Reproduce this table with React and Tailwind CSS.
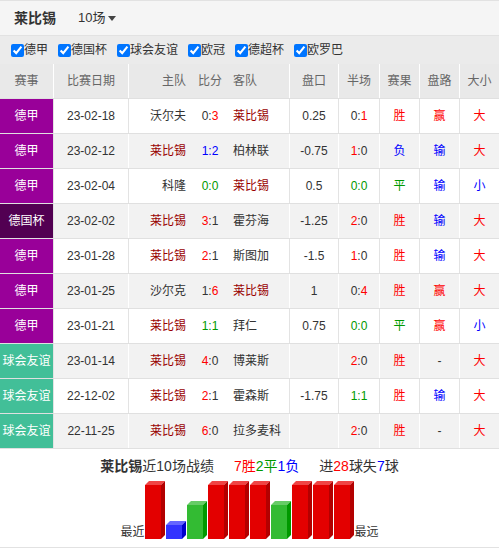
const RED = 'text-[#ff0000]';
const BLUE = 'text-[#0000ff]';
const GREEN = 'text-[#009900]';

const leagues = {
  德甲: 'bg-[#990099]',
  德国杯: 'bg-[#520052]',
  球会友谊: 'bg-[#42bf98]',
};

// sc / hc: which side of the score gets highlighted ('h' home, 'a' away, 'lose', 'draw')
const matches = [
  { league: '德甲', date: '23-02-18', home: '沃尔夫', score: ['0', '3'], sc: 'a', away: '莱比锡', line: '0.25', half: ['0', '1'], hc: 'a', res: '胜', pan: '赢', ou: '大' },
  { league: '德甲', date: '23-02-12', home: '莱比锡', score: ['1', '2'], sc: 'lose', away: '柏林联', line: '-0.75', half: ['1', '0'], hc: 'h', res: '负', pan: '输', ou: '大' },
  { league: '德甲', date: '23-02-04', home: '科隆', score: ['0', '0'], sc: 'draw', away: '莱比锡', line: '0.5', half: ['0', '0'], hc: 'draw', res: '平', pan: '输', ou: '小' },
  { league: '德国杯', date: '23-02-02', home: '莱比锡', score: ['3', '1'], sc: 'h', away: '霍芬海', line: '-1.25', half: ['2', '0'], hc: 'h', res: '胜', pan: '输', ou: '大' },
  { league: '德甲', date: '23-01-28', home: '莱比锡', score: ['2', '1'], sc: 'h', away: '斯图加', line: '-1.5', half: ['1', '0'], hc: 'h', res: '胜', pan: '输', ou: '大' },
  { league: '德甲', date: '23-01-25', home: '沙尔克', score: ['1', '6'], sc: 'a', away: '莱比锡', line: '1', half: ['0', '4'], hc: 'a', res: '胜', pan: '赢', ou: '大' },
  { league: '德甲', date: '23-01-21', home: '莱比锡', score: ['1', '1'], sc: 'draw', away: '拜仁', line: '0.75', half: ['0', '0'], hc: 'draw', res: '平', pan: '赢', ou: '小' },
  { league: '球会友谊', date: '23-01-14', home: '莱比锡', score: ['4', '0'], sc: 'h', away: '博莱斯', line: '', half: ['2', '0'], hc: 'h', res: '胜', pan: '-', ou: '大' },
  { league: '球会友谊', date: '22-12-02', home: '莱比锡', score: ['2', '1'], sc: 'h', away: '霍森斯', line: '-1.75', half: ['1', '1'], hc: 'draw', res: '胜', pan: '输', ou: '大' },
  { league: '球会友谊', date: '22-11-25', home: '莱比锡', score: ['6', '0'], sc: 'h', away: '拉多麦科', line: '', half: ['2', '0'], hc: 'h', res: '胜', pan: '-', ou: '大' },
];

const resColor = { 胜: RED, 负: BLUE, 平: GREEN };
const panColor = { 赢: RED, 输: BLUE, '-': 'text-[#333]' };
const ouColor = { 大: RED, 小: BLUE };

function Score({ pair, mode }) {
  if (mode === 'lose') return <span className={BLUE}>{pair[0]}:{pair[1]}</span>;
  if (mode === 'draw') return <span className={GREEN}>{pair[0]}:{pair[1]}</span>;
  return (
    <span className="text-[#333]">
      <span className={mode === 'h' ? RED : ''}>{pair[0]}</span>:
      <span className={mode === 'a' ? RED : ''}>{pair[1]}</span>
    </span>
  );
}

function Team({ name }) {
  return <span className={name === '莱比锡' ? 'text-[#990000]' : 'text-[#333]'}>{name}</span>;
}

const cols = 'grid grid-cols-[54px_75px_62px_38px_61px_49px_41px_40px_40px_39px]';

function Bars() {
  const results = ['胜', '负', '平', '胜', '胜', '胜', '平', '胜', '胜', '胜'];
  const spec = {
    胜: { h: 54, front: '#e30000', top: '#f04444', side: '#b30000' },
    平: { h: 34, front: '#33bb33', top: '#66cc66', side: '#009900' },
    负: { h: 14, front: '#3333ff', top: '#6666ff', side: '#0000cc' },
  };
  const base = 59;
  return (
    <svg width="210" height="59" viewBox="0 0 210 59">
      {results.map((r, i) => {
        const s = spec[r];
        const x = i * 21;
        const t = base - s.h;
        return (
          <g key={i}>
            <polygon points={`${x},${t} ${x + 4},${t - 4} ${x + 20},${t - 4} ${x + 16},${t}`} fill={s.top} />
            <polygon points={`${x + 16},${t} ${x + 20},${t - 4} ${x + 20},${base - 4} ${x + 16},${base}`} fill={s.side} />
            <rect x={x} y={t} width="16" height={s.h} fill={s.front} />
          </g>
        );
      })}
    </svg>
  );
}

export default function App() {
  const filters = ['德甲', '德国杯', '球会友谊', '欧冠', '德超杯', '欧罗巴'];
  return (
    <div className="w-[499px] h-[550px] bg-white text-[12px] text-[#333] font-['Liberation_Sans','Noto_Sans_CJK_SC',sans-serif] overflow-hidden">
      {/* title */}
      <div className="h-[36px] bg-[#f5f5f5] border-t border-b border-[#e2e2e2] flex items-center pl-[14px]">
        <span className="text-[14px] font-bold text-[#333]">莱比锡</span>
        <span className="ml-[22px] text-[13px] text-[#333] flex items-center">
          10场
          <span className="ml-[3px] w-0 h-0 border-l-[4px] border-r-[4px] border-t-[5px] border-l-transparent border-r-transparent border-t-[#444]"></span>
        </span>
      </div>

      {/* filters */}
      <div className="h-[28px] bg-[#ebebeb] flex items-center pl-[7px] gap-[6px]">
        {filters.map((f) => (
          <label key={f} className="flex items-center text-[12px] text-[#333]">
            <input type="checkbox" defaultChecked className="w-[13px] h-[13px] m-0 ml-[4px] mr-0 accent-[#0075ff]" />
            {f}
          </label>
        ))}
      </div>

      {/* header */}
      <div className={`${cols} h-[35px] bg-[#e9e9e9] text-[#666] border-b border-[#e0e0e0]`}>
        <div className="flex items-center justify-center border-r border-white">赛事</div>
        <div className="flex items-center justify-center border-r border-white">比赛日期</div>
        <div className="flex items-center justify-end pr-[5px]">主队</div>
        <div className="flex items-center justify-center">比分</div>
        <div className="flex items-center pl-[4px] border-r border-white">客队</div>
        <div className="flex items-center justify-center border-r border-white">盘口</div>
        <div className="flex items-center justify-center border-r border-white">半场</div>
        <div className="flex items-center justify-center border-r border-white">赛果</div>
        <div className="flex items-center justify-center border-r border-white">盘路</div>
        <div className="flex items-center justify-center">大小</div>
      </div>

      {/* rows */}
      {matches.map((m, i) => {
        const gray = i % 2 === 1;
        const vline = gray ? 'border-r border-white' : 'border-r border-[#e3e3e3]';
        return (
          <div key={i} className={`${cols} h-[35px] border-b border-[#e0e0e0] ${gray ? 'bg-[#f2f2f2]' : 'bg-white'}`}>
            <div className={`flex items-center justify-center text-white ${leagues[m.league]} border-r border-[#e3e3e3]`}>{m.league}</div>
            <div className={`flex items-center justify-center ${vline}`}>{m.date}</div>
            <div className="flex items-center justify-end pr-[5px]"><Team name={m.home} /></div>
            <div className="flex items-center justify-center"><Score pair={m.score} mode={m.sc} /></div>
            <div className={`flex items-center pl-[4px] ${vline}`}><Team name={m.away} /></div>
            <div className={`flex items-center justify-center ${vline}`}>{m.line}</div>
            <div className={`flex items-center justify-center ${vline}`}><Score pair={m.half} mode={m.hc} /></div>
            <div className={`flex items-center justify-center ${vline} ${resColor[m.res]}`}>{m.res}</div>
            <div className={`flex items-center justify-center ${vline} ${panColor[m.pan]}`}>{m.pan}</div>
            <div className={`flex items-center justify-center ${ouColor[m.ou]}`}>{m.ou}</div>
          </div>
        );
      })}

      {/* summary */}
      <div className="border-b border-[#e2e2e2] pb-[8px]">
        <div className="pt-[9px] flex justify-center gap-[20px] text-[14px] leading-[16px]">
          <span><b>莱比锡</b>近10场战绩</span>
          <span>
            <span className={RED}>7胜</span>
            <span className={GREEN}>2平</span>
            <span className={BLUE}>1负</span>
          </span>
          <span>
            进<span className={RED}>28</span>球失<span className={BLUE}>7</span>球
          </span>
        </div>
        <div className="mt-[6px] flex justify-center items-end leading-[14px] text-[12px]">
          <span>最近</span>
          <Bars />
          <span>最远</span>
        </div>
      </div>
    </div>
  );
}
